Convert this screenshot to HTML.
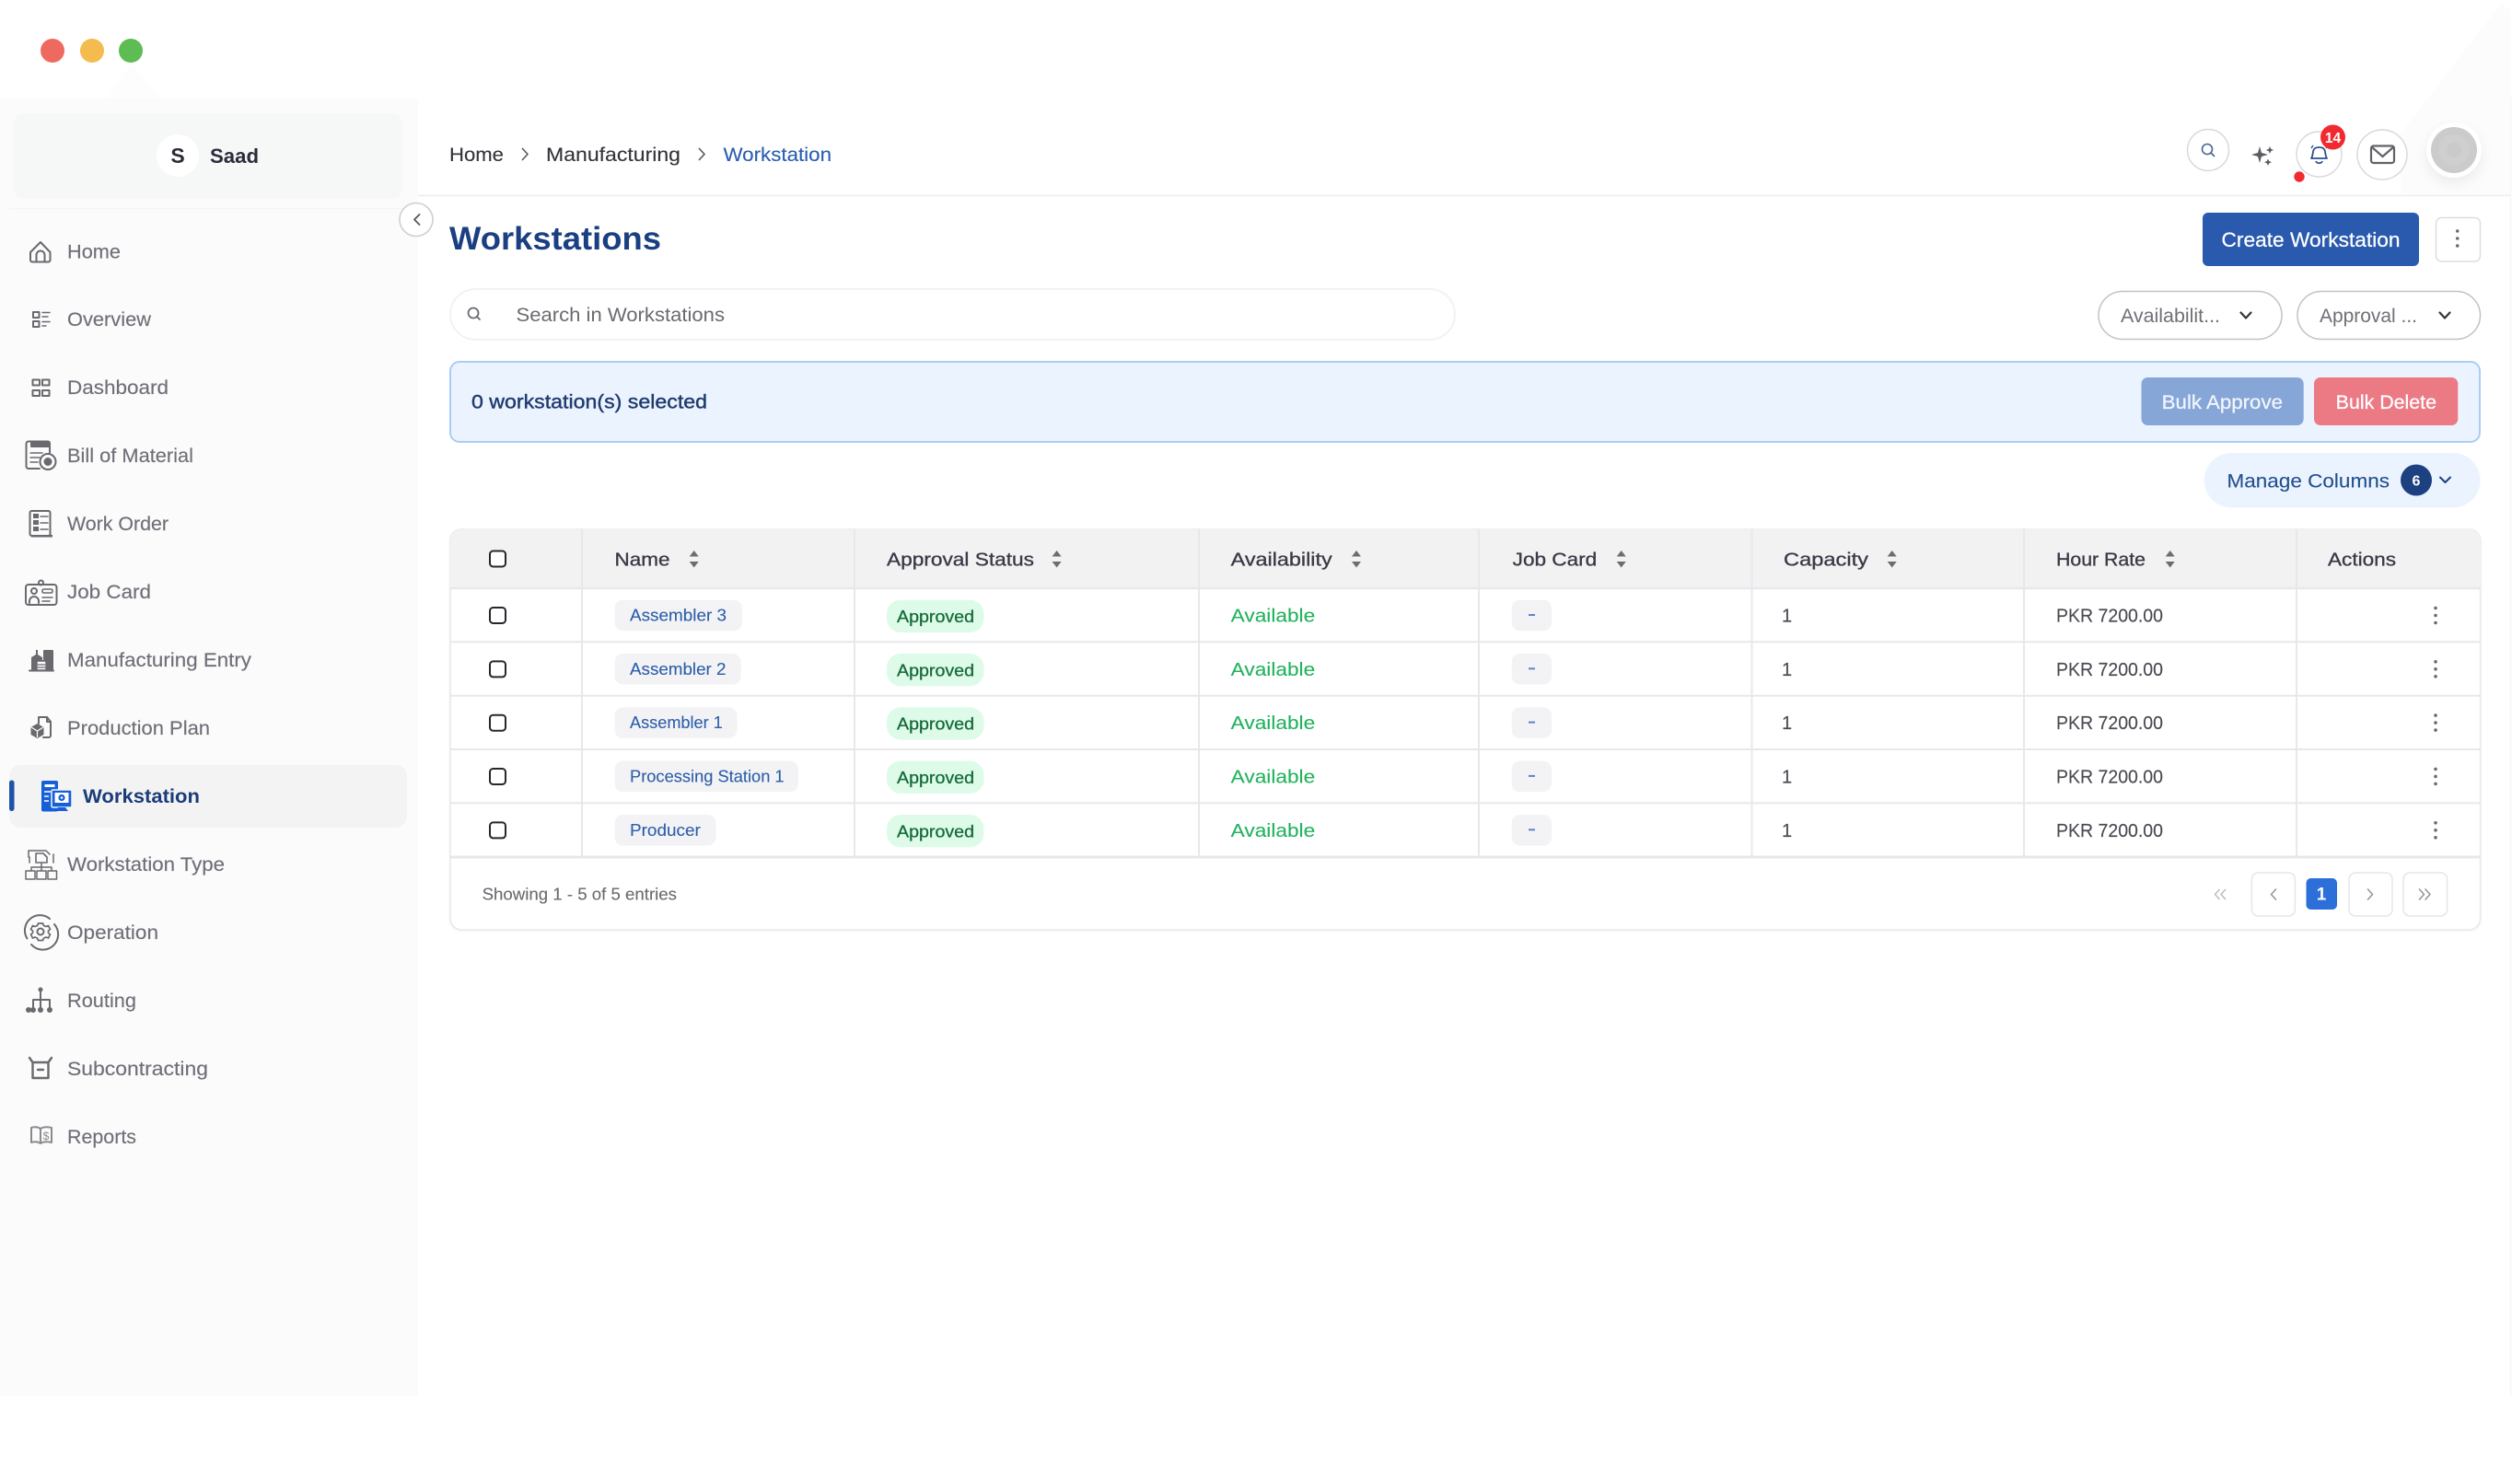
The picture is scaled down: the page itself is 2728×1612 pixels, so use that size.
<!DOCTYPE html>
<html lang="en">
<head>
<meta charset="utf-8">
<title>Workstations</title>
<style>
html,body{margin:0;padding:0;background:#fff;width:2728px;height:1612px;overflow:hidden}
svg{display:block}
text{font-family:"Liberation Sans",Arial,sans-serif}
.nav{font-size:21px;fill:#6f6f79;stroke:#6f6f79;stroke-width:.15}
.th{font-size:20.5px;fill:#3a3a48;font-weight:400;stroke:#3a3a48;stroke-width:.35}
.nm{font-size:18px;fill:#2d5eaa;stroke:#2d5eaa;stroke-width:.12}
.ap{font-size:18px;fill:#166b3a;stroke:#166b3a;stroke-width:.3}
.av{font-size:20.5px;fill:#22b35e;stroke:#22b35e;stroke-width:.12}
.td{font-size:20px;fill:#4a4a52;stroke:#4a4a52;stroke-width:.15}
.ic{fill:none;stroke:#69696f;stroke-width:2;stroke-linejoin:round;stroke-linecap:round}
.dk{fill:#69696f;stroke:none}
.ln{stroke:#e8e8ec;stroke-width:2}
.cb{fill:#fff;stroke:#26262c;stroke-width:2}
.chip{fill:#f3f3f5}
.pill{fill:#ddfbe8}
.kb{fill:#6a6a70}
.so{fill:#6c6c72}
.pg{fill:#fff;stroke:#e6e6e8;stroke-width:1.5}
.ch{fill:none;stroke:#96969c;stroke-width:1.6;stroke-linecap:round;stroke-linejoin:round}
</style>
</head>
<body>
<svg xmlns="http://www.w3.org/2000/svg" width="2728" height="1612" viewBox="0 0 2728 1612">
<defs>
<filter id="sh" x="-50%" y="-50%" width="200%" height="200%"><feGaussianBlur stdDeviation="7"/></filter>
<filter id="sh2" x="-5%" y="-5%" width="110%" height="110%"><feGaussianBlur stdDeviation="2"/></filter>
<g id="sort"><path class="so" d="M0 -9 L5 -2.500 H-5 Z"/><path class="so" d="M0 9.500 L5 3 H-5 Z"/></g>
<g id="keb"><circle class="kb" cx="0" cy="-8" r="1.800"/><circle class="kb" cx="0" cy="0" r="1.800"/><circle class="kb" cx="0" cy="8" r="1.800"/></g>
</defs>

<rect width="2728" height="1612" fill="#fff"/>
<!-- faint decor -->
<polygon points="115,107 143,68 175,107" fill="#fdfdfd"/>
<polygon points="2716,4 2607,145 2607,212 2726,212 2726,10" fill="#fcfcfc"/>
<line x1="2726.500" y1="105" x2="2726.500" y2="1516" stroke="#f6f6f6" stroke-width="1.500"/>

<!-- sidebar -->
<rect x="0" y="107" width="454" height="1409" fill="#fbfbfb"/>
<circle cx="57" cy="55" r="13" fill="#ee6a5f"/>
<circle cx="100" cy="55" r="13" fill="#f4bb4f"/>
<circle cx="142" cy="55" r="13" fill="#5dbd53"/>
<rect x="15" y="123" width="422" height="93" rx="11" fill="#f6f7f7"/>
<line x1="10" y1="226.500" x2="437" y2="226.500" stroke="#f4f4f4" stroke-width="1.500"/>
<circle cx="193" cy="169" r="23" fill="#fff"/>
<text x="193" y="177" text-anchor="middle" font-size="23" font-weight="700" fill="#2b2b3a">S</text>
<text x="228" y="177" font-size="22" font-weight="700" fill="#2b2b3a" textLength="53" lengthAdjust="spacingAndGlyphs">Saad</text>

<!-- header line -->
<line x1="454" y1="212.500" x2="2726" y2="212.500" stroke="#eeeeee" stroke-width="1.500"/>
<circle cx="452" cy="238.500" r="18" fill="#fff" stroke="#cfcfcf" stroke-width="1.600"/>
<path d="M455.500 233 L450 238.500 L455.500 244" fill="none" stroke="#55555c" stroke-width="1.800" stroke-linecap="round" stroke-linejoin="round"/>

<!-- nav text -->
<text class="nav" x="73" y="280.500" textLength="58" lengthAdjust="spacingAndGlyphs">Home</text>
<text class="nav" x="73" y="354" textLength="91" lengthAdjust="spacingAndGlyphs">Overview</text>
<text class="nav" x="73" y="428" textLength="110" lengthAdjust="spacingAndGlyphs">Dashboard</text>
<text class="nav" x="73" y="502" textLength="137" lengthAdjust="spacingAndGlyphs">Bill of Material</text>
<text class="nav" x="73" y="576" textLength="110" lengthAdjust="spacingAndGlyphs">Work Order</text>
<text class="nav" x="73" y="650" textLength="91" lengthAdjust="spacingAndGlyphs">Job Card</text>
<text class="nav" x="73" y="724" textLength="200" lengthAdjust="spacingAndGlyphs">Manufacturing Entry</text>
<text class="nav" x="73" y="798" textLength="155" lengthAdjust="spacingAndGlyphs">Production Plan</text>
<rect x="10" y="831" width="432" height="68" rx="12" fill="#f3f3f3"/>
<rect x="10" y="847.500" width="5.500" height="33.500" rx="2.700" fill="#1f52a8"/>
<text x="90" y="872" font-size="21" font-weight="700" fill="#1a3c78" textLength="127" lengthAdjust="spacingAndGlyphs">Workstation</text>
<text class="nav" x="73" y="946" textLength="171" lengthAdjust="spacingAndGlyphs">Workstation Type</text>
<text class="nav" x="73" y="1020" textLength="99" lengthAdjust="spacingAndGlyphs">Operation</text>
<text class="nav" x="73" y="1094" textLength="75" lengthAdjust="spacingAndGlyphs">Routing</text>
<text class="nav" x="73" y="1168" textLength="153" lengthAdjust="spacingAndGlyphs">Subcontracting</text>
<text class="nav" x="73" y="1242" textLength="75" lengthAdjust="spacingAndGlyphs">Reports</text>

<!-- nav icons -->
<g class="ic">
<path d="M33 274 L44 263 L54.500 274 V282.500 a2 2 0 0 1 -2 2 H35 a2 2 0 0 1 -2 -2 Z"/>
<path d="M39.500 284.500 V277 a4.500 4.500 0 0 1 9 0 V284.500"/>
<rect x="36" y="339" width="6.500" height="6"/>
<rect x="36" y="349" width="6.500" height="6"/>
<path d="M46 339.500 H54 M46 344 H52 M46 349.500 H54 M46 354 H50" stroke-width="1.500"/>
<rect x="35.500" y="412.500" width="7.500" height="6"/>
<rect x="35.500" y="424" width="7.500" height="6"/>
<rect x="46" y="412.500" width="7.500" height="6"/>
<rect x="46" y="424" width="7.500" height="6"/>
<path d="M43 509 H31 a2.500 2.500 0 0 1 -2.500 -2.500 V482 a2.500 2.500 0 0 1 2.500 -2.500 H52 a2 2 0 0 1 2 2 V492"/>
<path d="M33 492 H46 M33 497 H43 M33 502 H41" stroke-width="1.500"/>
<rect x="32.500" y="555" width="22" height="27" rx="2"/>
<path d="M44 561 H52 M44 568 H52 M44 575 H52" stroke-width="1.500"/>
<rect x="28" y="635" width="33.500" height="22" rx="3"/>
<circle cx="44.500" cy="633" r="2.500"/>
<circle cx="37" cy="642" r="3"/>
<path d="M32 655 v-2 a5 5 0 0 1 10 0 v2"/>
<rect x="46" y="640" width="11" height="4" rx="1.500" stroke-width="1.600"/>
<path d="M46 649 H57 M46 653 H54" stroke-width="1.600"/>
<path d="M38 728 V714 M52 712 V728 M32 728.500 H58"/>
<rect x="40" y="718" width="10" height="10"/>
<path d="M41 722 H49 M41 725 H49" stroke-width="1.300"/>
<path d="M42 786 V779 H51 L55 784 V799 a2 2 0 0 1 -2 2 H47"/>
<path d="M51 779 V784 H55"/>
<path d="M31 931 V924 H50 L54 928 M58 928 V937 M32 937 V931" stroke-width="1.500"/>
<path d="M39 927 H47 L51 931 V937 H39 Z" stroke-width="1.600"/>
<path d="M45 937 V942 M34 942 H56 M34 942 V946 M45 942 V946 M56 942 V946" stroke-width="1.500"/>
<rect x="28" y="946" width="10" height="9" stroke-width="1.500"/>
<rect x="40" y="946" width="10" height="9" stroke-width="1.500"/>
<rect x="52" y="946" width="9.500" height="9" stroke-width="1.500"/>
<path d="M54 998 A16.500 16.500 0 0 0 29.500 1019.500"/>
<path d="M34 1026 A16.500 16.500 0 0 0 59 1004"/>
<circle cx="44" cy="1012" r="3.500"/>
<path d="M41.500 1003 h5 l1 2.500 2.500 1 2.500 -1 2 4 -2 1.500 v2.500 l2 1.500 -2 4 -2.500 -1 -2.500 1 -1 2.500 h-5 l-1 -2.500 -2.500 -1 -2.500 1 -2 -4 2 -1.500 v-2.500 l-2 -1.500 2 -4 2.500 1 2.500 -1 Z" stroke-width="1.700"/>
<path d="M44 1076 V1086 M36 1086 H54 M36 1086 V1096 M44 1086 V1096 M54 1086 V1096"/>
<path d="M32 1149 L35.500 1154 H52.500 L56 1149 M35.500 1154 V1171 H52.500 V1154 M41 1162 H47" stroke-width="2.400"/>
<path d="M44 1226 C41 1224 37 1224 34 1225 V1241 C37 1240 41 1240 44 1242 C47 1240 52 1240 56 1241 V1225 C52 1224 47 1224 44 1226 Z M44 1226 V1242" stroke="#8a8a90" stroke-width="2"/>
</g>
<text x="50" y="1238" text-anchor="middle" font-size="12" fill="#8a8a90">$</text>
<g>
<rect class="dk" x="33" y="480" width="21" height="6" rx="1"/>
<circle cx="52" cy="501.500" r="8.500" fill="#fbfbfb" stroke="#69696f" stroke-width="2"/>
<circle class="dk" cx="52" cy="501.500" r="4.500"/>
<rect class="dk" x="36" y="558" width="6" height="5"/>
<rect class="dk" x="36" y="565" width="6" height="5"/>
<rect class="dk" x="36" y="572" width="6" height="5"/>
<rect class="dk" x="34" y="581" width="23" height="2.500"/>
<rect class="dk" x="47" y="706" width="11" height="22" rx="1"/>
<path class="dk" d="M34 728 V714 L39 711 V706 H41 V711 L46 714 V728 Z"/>
<rect x="40" y="718" width="10" height="10" fill="#fbfbfb" stroke="#69696f" stroke-width="1.500"/>
<path d="M41 722 H49 M41 725 H49" stroke="#69696f" stroke-width="1.300"/>
<path class="dk" d="M40.500 786 L47.500 790 V798 L40.500 802 L33.500 798 V790 Z"/>
<path d="M34 790 L40.500 794 L47 790 M40.500 794 V801" stroke="#fbfbfb" stroke-width="1.300" fill="none"/>
<g class="dk">
<circle cx="31" cy="1097" r="3"/><circle cx="44" cy="1097" r="3"/><circle cx="36" cy="1097" r="3"/><circle cx="54" cy="1097" r="3"/>
<circle cx="44" cy="1075" r="2.500"/>
</g>
<!-- workstation icon -->
<rect x="45" y="848" width="18" height="33.500" rx="2" fill="#155fd9"/>
<rect x="48.500" y="852" width="11" height="3" fill="#fff"/>
<path d="M48 860 h7 M48 865 h5 M48 870 h5" stroke="#fff" stroke-width="1.500"/>
<rect x="56" y="858" width="22" height="19" rx="1.500" fill="#155fd9" stroke="#f3f3f3" stroke-width="1.500"/>
<rect x="59.500" y="861" width="15" height="11" fill="#fff"/>
<circle cx="67" cy="866.500" r="3.600" fill="#155fd9"/>
<circle cx="67" cy="866.500" r="1.300" fill="#fff"/>
<path d="M60 881 h14 l-3 -4 h-8 Z" fill="#155fd9"/>
</g>

<!-- breadcrumb -->
<text x="488" y="175" font-size="21" fill="#333339" stroke="#333339" stroke-width=".12" textLength="59" lengthAdjust="spacingAndGlyphs">Home</text>
<path d="M567 161 L573 167.500 L567 174" fill="none" stroke="#555" stroke-width="1.500"/>
<text x="593" y="175" font-size="21" fill="#333339" stroke="#333339" stroke-width=".12" textLength="146" lengthAdjust="spacingAndGlyphs">Manufacturing</text>
<path d="M759 161 L765 167.500 L759 174" fill="none" stroke="#555" stroke-width="1.500"/>
<text x="785.500" y="175" font-size="21" fill="#2a5db0" stroke="#2a5db0" stroke-width=".12" textLength="117.500" lengthAdjust="spacingAndGlyphs">Workstation</text>

<!-- top right icons -->
<circle cx="2398" cy="163" r="22.500" fill="#fff" stroke="#d8d8d8" stroke-width="1.400"/>
<circle cx="2397" cy="162" r="5.500" fill="none" stroke="#4a6494" stroke-width="1.600"/>
<line x1="2401" y1="166" x2="2404.500" y2="169.500" stroke="#4a6494" stroke-width="1.600" stroke-linecap="round"/>
<path d="M2454 159 L2456 166 L2463 168 L2456 170 L2454 177 L2452 170 L2445 168 L2452 166 Z" fill="#5c5c62"/>
<path d="M2465 159 L2466.200 161.800 L2469 163 L2466.200 164.200 L2465 167 L2463.800 164.200 L2461 163 L2463.800 161.800 Z" fill="#5c5c62"/>
<path d="M2463 172.500 L2464.200 175 L2467 176.200 L2464.200 177.400 L2463 180 L2461.800 177.400 L2459 176.200 L2461.800 175 Z" fill="#5c5c62"/>
<circle cx="2518.500" cy="167.500" r="24.500" fill="#fff" stroke="#d8d8d8" stroke-width="1.400"/>
<path d="M2510 172 C2512 169 2511.500 165 2512.500 163 C2514 159 2523 159 2524.500 163 C2525.500 165 2525 169 2527 172 Z M2515 175 C2516 178 2521 178 2522 175" fill="none" stroke="#2f4f8f" stroke-width="1.800" stroke-linejoin="round"/>
<path d="M2510 161 L2512 158 M2527 161 L2525 158" stroke="#2f4f8f" stroke-width="1.400"/>
<circle cx="2533.500" cy="149" r="13.500" fill="#f12a30"/>
<text x="2533.500" y="155" text-anchor="middle" font-size="15.500" font-weight="700" fill="#fff">14</text>
<circle cx="2497" cy="192" r="5.700" fill="#f12a30"/>
<circle cx="2587" cy="168" r="27" fill="#fff" stroke="#d8d8d8" stroke-width="1.400"/>
<rect x="2575" y="158.500" width="25" height="18.500" rx="2.500" fill="none" stroke="#62626a" stroke-width="2.200"/>
<path d="M2576 160 L2587.500 170 L2599 160" fill="none" stroke="#62626a" stroke-width="2.200"/>
<circle cx="2665" cy="169" r="31" fill="#000" opacity=".06" filter="url(#sh)"/>
<circle cx="2665" cy="163" r="30" fill="#fff"/>
<circle cx="2665" cy="163" r="25" fill="#cbcbcb"/>
<circle cx="2665" cy="163" r="17" fill="#cfcfcf"/>
<circle cx="2665" cy="163" r="8" fill="#cacaca"/>

<!-- title -->
<text x="488" y="271" font-size="35" font-weight="700" fill="#1a3f82" textLength="230" lengthAdjust="spacingAndGlyphs">Workstations</text>
<rect x="2392" y="231" width="235" height="58" rx="6" fill="#2a5aad"/>
<text x="2412.500" y="268" font-size="22" fill="#fff" stroke="#fff" stroke-width=".25" textLength="194" lengthAdjust="spacingAndGlyphs">Create Workstation</text>
<rect x="2645.500" y="236.500" width="48" height="47.500" rx="6" fill="#fff" stroke="#dddddf" stroke-width="1.500"/>
<use href="#keb" x="2668.700" y="259"/>

<!-- search -->
<rect x="489" y="314" width="1091" height="55" rx="27.500" fill="#fff" stroke="#f2f2f2" stroke-width="2"/>
<circle cx="514" cy="340" r="5.500" fill="none" stroke="#6a6a72" stroke-width="1.800"/>
<line x1="518" y1="344" x2="521" y2="347" stroke="#6a6a72" stroke-width="1.800" stroke-linecap="round"/>
<text x="560.500" y="349" font-size="21" fill="#6a6a70" textLength="226.500" lengthAdjust="spacingAndGlyphs">Search in Workstations</text>

<!-- filters -->
<rect x="2279" y="316.500" width="199" height="52" rx="26" fill="#fff" stroke="#c2c2c4" stroke-width="1.500"/>
<text x="2303" y="350" font-size="21" fill="#6f6f76" textLength="108" lengthAdjust="spacingAndGlyphs">Availabilit...</text>
<path d="M2433.500 339.500 L2439 345.500 L2444.500 339.500" fill="none" stroke="#333339" stroke-width="2.200" stroke-linecap="round" stroke-linejoin="round"/>
<rect x="2495" y="316.500" width="198.500" height="52" rx="26" fill="#fff" stroke="#c2c2c4" stroke-width="1.500"/>
<text x="2519" y="350" font-size="21" fill="#6f6f76" textLength="106" lengthAdjust="spacingAndGlyphs">Approval ...</text>
<path d="M2649.500 339.500 L2655 345.500 L2660.500 339.500" fill="none" stroke="#333339" stroke-width="2.200" stroke-linecap="round" stroke-linejoin="round"/>

<!-- selection bar -->
<rect x="489" y="393" width="2204" height="87" rx="10" fill="#ebf3fe" stroke="#a9cdf7" stroke-width="2"/>
<text x="512" y="443.500" font-size="21" fill="#1e3a6e" stroke="#1e3a6e" stroke-width=".4" textLength="256" lengthAdjust="spacingAndGlyphs">0 workstation(s) selected</text>
<rect x="2325.500" y="410" width="176.200" height="52" rx="7" fill="#87a6d8"/>
<text x="2347.700" y="444" font-size="21" fill="#f2f6fd" stroke="#f2f6fd" stroke-width=".25" textLength="131.300" lengthAdjust="spacingAndGlyphs">Bulk Approve</text>
<rect x="2513" y="410" width="156.300" height="52" rx="7" fill="#ec7a85"/>
<text x="2536.700" y="444" font-size="21" fill="#fff" stroke="#fff" stroke-width=".25" textLength="109.300" lengthAdjust="spacingAndGlyphs">Bulk Delete</text>

<!-- manage columns -->
<rect x="2393.700" y="492" width="299.900" height="59.400" rx="29.700" fill="#ebf3fe"/>
<text x="2418.500" y="529.500" font-size="21" fill="#23508f" stroke="#23508f" stroke-width=".12" textLength="176.500" lengthAdjust="spacingAndGlyphs">Manage Columns</text>
<circle cx="2624" cy="521.500" r="17" fill="#1c4080"/>
<text x="2624" y="527.500" text-anchor="middle" font-size="16" font-weight="700" fill="#fff">6</text>
<path d="M2650 518.500 L2655.500 524 L2661 518.500" fill="none" stroke="#1c4080" stroke-width="2" stroke-linecap="round" stroke-linejoin="round"/>

<!-- table -->
<rect x="489" y="577" width="2204.600" height="434" rx="12" fill="#000" opacity=".06" filter="url(#sh2)"/>
<rect x="489" y="575" width="2204.600" height="435" rx="12" fill="#fff" stroke="#e8e8ec" stroke-width="1.600"/>
<path d="M489 639 V587 a12 12 0 0 1 12 -12 H2681.600 a12 12 0 0 1 12 12 V639 Z" fill="#f2f2f3"/>
<g class="ln">
<line x1="489" y1="639" x2="2693.600" y2="639" stroke-width="2.500"/>
<line x1="489" y1="697.300" x2="2693.600" y2="697.300"/>
<line x1="489" y1="755.700" x2="2693.600" y2="755.700"/>
<line x1="489" y1="814" x2="2693.600" y2="814"/>
<line x1="489" y1="872.400" x2="2693.600" y2="872.400"/>
<line x1="489" y1="931" x2="2693.600" y2="931" stroke-width="3"/>
<line x1="632" y1="575" x2="632" y2="931"/>
<line x1="928" y1="575" x2="928" y2="931"/>
<line x1="1302" y1="575" x2="1302" y2="931"/>
<line x1="1606" y1="575" x2="1606" y2="931"/>
<line x1="1902.500" y1="575" x2="1902.500" y2="931"/>
<line x1="2198" y1="575" x2="2198" y2="931"/>
<line x1="2494" y1="575" x2="2494" y2="931"/>
</g>

<!-- head -->
<rect class="cb" x="532" y="598.500" width="17" height="17" rx="3.500"/>
<text class="th" x="667.500" y="614.500" textLength="60" lengthAdjust="spacingAndGlyphs">Name</text>
<use href="#sort" x="753.700" y="607"/>
<text class="th" x="963" y="614.500" textLength="160" lengthAdjust="spacingAndGlyphs">Approval Status</text>
<use href="#sort" x="1147.600" y="607"/>
<text class="th" x="1336.700" y="614.500" textLength="110" lengthAdjust="spacingAndGlyphs">Availability</text>
<use href="#sort" x="1473" y="607"/>
<text class="th" x="1642.700" y="614.500" textLength="91.500" lengthAdjust="spacingAndGlyphs">Job Card</text>
<use href="#sort" x="1760.700" y="607"/>
<text class="th" x="1937" y="614.500" textLength="92" lengthAdjust="spacingAndGlyphs">Capacity</text>
<use href="#sort" x="2054.700" y="607"/>
<text class="th" x="2233" y="614.500" textLength="97" lengthAdjust="spacingAndGlyphs">Hour Rate</text>
<use href="#sort" x="2356.700" y="607"/>
<text class="th" x="2528" y="614.500" textLength="74" lengthAdjust="spacingAndGlyphs">Actions</text>

<!-- row 1 -->
<rect class="cb" x="532" y="660" width="17" height="17" rx="3.500"/>
<rect class="chip" x="667.500" y="651.700" width="138.500" height="33.600" rx="9"/>
<text class="nm" x="684" y="674.500" textLength="105" lengthAdjust="spacingAndGlyphs">Assembler 3</text>
<rect class="pill" x="963" y="651.700" width="105.500" height="35.300" rx="15"/>
<text class="ap" x="974" y="676" textLength="84" lengthAdjust="spacingAndGlyphs">Approved</text>
<text class="av" x="1336.700" y="675.500" textLength="91.500" lengthAdjust="spacingAndGlyphs">Available</text>
<rect class="chip" x="1641.700" y="651.700" width="43.300" height="33.600" rx="9"/>
<rect x="1660" y="667" width="7" height="2" fill="#5f84c8"/>
<text class="td" x="1935" y="675.500">1</text>
<text class="td" x="2233" y="675.500" textLength="116" lengthAdjust="spacingAndGlyphs">PKR 7200.00</text>
<use href="#keb" x="2645" y="668.500"/>

<!-- row 2 -->
<rect class="cb" x="532" y="718.400" width="17" height="17" rx="3.500"/>
<rect class="chip" x="667.500" y="710" width="137.200" height="33.600" rx="9"/>
<text class="nm" x="684" y="732.800" textLength="104.500" lengthAdjust="spacingAndGlyphs">Assembler 2</text>
<rect class="pill" x="963" y="710" width="105.500" height="35.300" rx="15"/>
<text class="ap" x="974" y="734.300" textLength="84" lengthAdjust="spacingAndGlyphs">Approved</text>
<text class="av" x="1336.700" y="733.800" textLength="91.500" lengthAdjust="spacingAndGlyphs">Available</text>
<rect class="chip" x="1641.700" y="710" width="43.300" height="33.600" rx="9"/>
<rect x="1660" y="725.300" width="7" height="2" fill="#5f84c8"/>
<text class="td" x="1935" y="733.800">1</text>
<text class="td" x="2233" y="733.800" textLength="116" lengthAdjust="spacingAndGlyphs">PKR 7200.00</text>
<use href="#keb" x="2645" y="726.800"/>

<!-- row 3 -->
<rect class="cb" x="532" y="776.700" width="17" height="17" rx="3.500"/>
<rect class="chip" x="667.500" y="768.300" width="133.100" height="33.600" rx="9"/>
<text class="nm" x="684" y="791.100" textLength="100.800" lengthAdjust="spacingAndGlyphs">Assembler 1</text>
<rect class="pill" x="963" y="768.300" width="105.500" height="35.300" rx="15"/>
<text class="ap" x="974" y="792.600" textLength="84" lengthAdjust="spacingAndGlyphs">Approved</text>
<text class="av" x="1336.700" y="792.100" textLength="91.500" lengthAdjust="spacingAndGlyphs">Available</text>
<rect class="chip" x="1641.700" y="768.300" width="43.300" height="33.600" rx="9"/>
<rect x="1660" y="783.600" width="7" height="2" fill="#5f84c8"/>
<text class="td" x="1935" y="792.100">1</text>
<text class="td" x="2233" y="792.100" textLength="116" lengthAdjust="spacingAndGlyphs">PKR 7200.00</text>
<use href="#keb" x="2645" y="785.100"/>

<!-- row 4 -->
<rect class="cb" x="532" y="835" width="17" height="17" rx="3.500"/>
<rect class="chip" x="667.500" y="826.600" width="199.500" height="33.600" rx="9"/>
<text class="nm" x="684" y="849.400" textLength="167.600" lengthAdjust="spacingAndGlyphs">Processing Station 1</text>
<rect class="pill" x="963" y="826.600" width="105.500" height="35.300" rx="15"/>
<text class="ap" x="974" y="850.900" textLength="84" lengthAdjust="spacingAndGlyphs">Approved</text>
<text class="av" x="1336.700" y="850.400" textLength="91.500" lengthAdjust="spacingAndGlyphs">Available</text>
<rect class="chip" x="1641.700" y="826.600" width="43.300" height="33.600" rx="9"/>
<rect x="1660" y="841.900" width="7" height="2" fill="#5f84c8"/>
<text class="td" x="1935" y="850.400">1</text>
<text class="td" x="2233" y="850.400" textLength="116" lengthAdjust="spacingAndGlyphs">PKR 7200.00</text>
<use href="#keb" x="2645" y="843.400"/>

<!-- row 5 -->
<rect class="cb" x="532" y="893.400" width="17" height="17" rx="3.500"/>
<rect class="chip" x="667.500" y="885" width="110.100" height="33.600" rx="9"/>
<text class="nm" x="684" y="907.800" textLength="76.800" lengthAdjust="spacingAndGlyphs">Producer</text>
<rect class="pill" x="963" y="885" width="105.500" height="35.300" rx="15"/>
<text class="ap" x="974" y="909.300" textLength="84" lengthAdjust="spacingAndGlyphs">Approved</text>
<text class="av" x="1336.700" y="908.800" textLength="91.500" lengthAdjust="spacingAndGlyphs">Available</text>
<rect class="chip" x="1641.700" y="885" width="43.300" height="33.600" rx="9"/>
<rect x="1660" y="900.300" width="7" height="2" fill="#5f84c8"/>
<text class="td" x="1935" y="908.800">1</text>
<text class="td" x="2233" y="908.800" textLength="116" lengthAdjust="spacingAndGlyphs">PKR 7200.00</text>
<use href="#keb" x="2645" y="901.800"/>

<!-- footer -->
<text x="523.600" y="977.500" font-size="18" fill="#6a6a70" stroke="#6a6a70" stroke-width=".12" textLength="211.400" lengthAdjust="spacingAndGlyphs">Showing 1 - 5 of 5 entries</text>
<path d="M2410.500 966 L2405.500 971.500 L2410.500 977 M2417 966 L2412 971.500 L2417 977" fill="none" stroke="#bcbcc0" stroke-width="1.500"/>
<rect class="pg" x="2445.400" y="948" width="47" height="47" rx="7"/>
<path class="ch" d="M2471.500 966 L2466.500 971.500 L2471.500 977"/>
<rect x="2504.500" y="954" width="33.500" height="34" rx="5" fill="#2d6fd9"/>
<text x="2521" y="977.500" text-anchor="middle" font-size="19" font-weight="700" fill="#fff">1</text>
<rect class="pg" x="2551" y="948" width="47" height="47" rx="7"/>
<path class="ch" d="M2571.500 966 L2576.500 971.500 L2571.500 977"/>
<rect class="pg" x="2610" y="948" width="47.600" height="47" rx="7"/>
<path class="ch" d="M2627.500 966 L2632.500 971.500 L2627.500 977 M2634 966 L2639 971.500 L2634 977"/>
</svg>
</body>
</html>
